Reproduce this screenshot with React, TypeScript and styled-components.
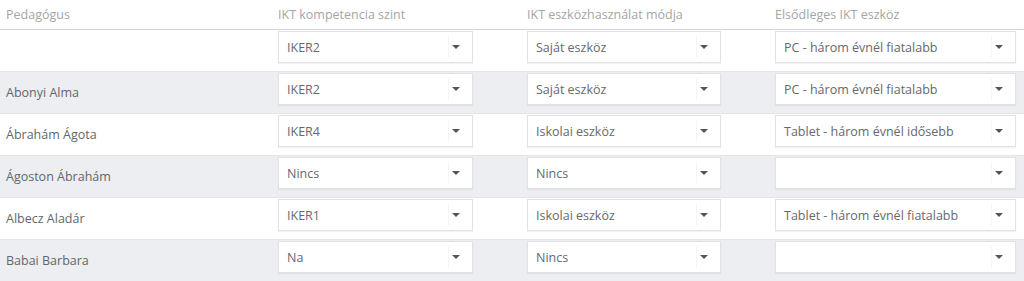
import { type FC } from 'react';
import styled, { createGlobalStyle } from 'styled-components';

const GlobalStyle = createGlobalStyle`
  html, body {
    margin: 0;
    padding: 0;
    background: #ffffff;
    font-family: 'Open Sans', 'Noto Sans', sans-serif;
  }
`;

type Teacher = {
  name: string;
  level: string;
  usage: string;
  device: string;
};

const teachers: Teacher[] = [
  { name: '', level: 'IKER2', usage: 'Saját eszköz', device: 'PC - három évnél fiatalabb' },
  { name: 'Abonyi Alma', level: 'IKER2', usage: 'Saját eszköz', device: 'PC - három évnél fiatalabb' },
  { name: 'Ábrahám Ágota', level: 'IKER4', usage: 'Iskolai eszköz', device: 'Tablet - három évnél idősebb' },
  { name: 'Ágoston Ábrahám', level: 'Nincs', usage: 'Nincs', device: '' },
  { name: 'Albecz Aladár', level: 'IKER1', usage: 'Iskolai eszköz', device: 'Tablet - három évnél fiatalabb' },
  { name: 'Babai Barbara', level: 'Na', usage: 'Nincs', device: '' },
];

const Table = styled.div`
  width: 1024px;
`;

const Grid = styled.div`
  display: grid;
  grid-template-columns: 272px 249px 248px 1fr;
`;

const HeaderRow = styled(Grid)`
  height: 30px;
  align-items: center;
  border-bottom: 1px solid #d2d5d9;
  box-sizing: border-box;
`;

const HeaderCell = styled.div`
  padding-left: 6px;
  font-size: 12.5px;
  color: #a5a5a5;
`;

const Row = styled(Grid)<{ $shaded: boolean }>`
  height: 42px;
  box-sizing: border-box;
  background: ${(p) => (p.$shaded ? '#eceef1' : '#ffffff')};
  border-bottom: 1px solid #e3e5e8;
`;

const NameCell = styled.div`
  display: flex;
  align-items: center;
  padding-left: 6px;
  font-size: 12.5px;
  color: #63676b;
`;

const SelectCell = styled.div`
  padding: 1px 8px 0 6px;
`;

const SelectBox = styled.div<{ $width?: number }>`
  height: 32px;
  box-sizing: border-box;
  display: flex;
  align-items: stretch;
  ${(p) => (p.$width ? `width: ${p.$width}px;` : '')}
  background: #ffffff;
  border: 1px solid #e0e2e5;
  box-shadow: 0 1px 1px rgba(0, 0, 0, 0.05);
`;

const SelectValue = styled.div`
  flex: 1;
  display: flex;
  align-items: center;
  padding-left: 8px;
  font-size: 12.5px;
  color: #65696d;
  white-space: nowrap;
  overflow: hidden;
`;

const ArrowBox = styled.div`
  width: 24px;
  display: flex;
  align-items: center;
  padding-left: 3px;
  box-sizing: border-box;
  border-left: 1px solid #f5f5f6;
  margin: 4px 0;
`;

const Caret = styled.span`
  width: 0;
  height: 0;
  border-left: 4px solid transparent;
  border-right: 4px solid transparent;
  border-top: 4px solid #555;
`;

const Select: FC<{ value: string; width?: number }> = ({ value, width }) => (
  <SelectCell>
    <SelectBox $width={width}>
      <SelectValue>{value}</SelectValue>
      <ArrowBox>
        <Caret />
      </ArrowBox>
    </SelectBox>
  </SelectCell>
);

export default function App() {
  return (
    <>
      <GlobalStyle />
      <Table>
        <HeaderRow>
          <HeaderCell>Pedagógus</HeaderCell>
          <HeaderCell>IKT kompetencia szint</HeaderCell>
          <HeaderCell>IKT eszközhasználat módja</HeaderCell>
          <HeaderCell>Elsődleges IKT eszköz</HeaderCell>
        </HeaderRow>
        {teachers.map((t, i) => (
          <Row key={i} $shaded={i % 2 === 1}>
            <NameCell>{t.name}</NameCell>
            <Select value={t.level} width={195} />
            <Select value={t.usage} width={194} />
            <Select value={t.device} />
          </Row>
        ))}
      </Table>
    </>
  );
}
